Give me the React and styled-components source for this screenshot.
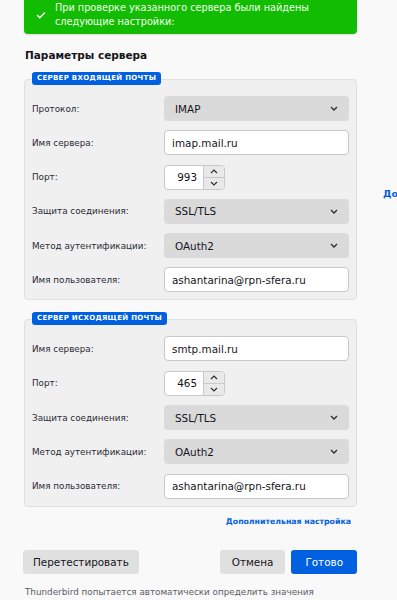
import React from "react";
import styled, { createGlobalStyle } from "styled-components";

const GlobalStyle = createGlobalStyle`
  html, body {
    margin: 0;
    padding: 0;
    background: #f9f9f9;
    font-family: "DejaVu Sans", "Liberation Sans", sans-serif;
    color: #15141a;
  }
`;

const Page = styled.div`
  display: flex;
  width: 397px;
  height: 600px;
  overflow: hidden;
  padding-left: 24px;
  box-sizing: border-box;
`;

const Main = styled.div`
  flex: 0 0 333px;
  min-width: 0;
  display: flex;
  flex-direction: column;
  margin-top: -3px;
`;

const Side = styled.div`
  flex: 0 0 auto;
  margin-left: 26px;
  padding-top: 182px;
  white-space: nowrap;
`;

const SideLink = styled.a`
  font-size: 9.5px;
  font-weight: bold;
  color: #0060df;
  text-decoration: none;
`;

const Banner = styled.div`
  display: flex;
  align-items: center;
  gap: 9px;
  background: #12bc00;
  color: #f3fff0;
  border-radius: 4px;
  padding: 4px 12px 5px 12px;
  font-size: 9.7px;
  line-height: 14px;
  box-shadow: 0 1px 2px rgba(0, 0, 0, 0.12);
`;

const Heading = styled.h2`
  margin: 13px 0 0 1px;
  font-size: 10.5px;
  font-weight: bold;
  line-height: 16px;
`;

const Group = styled.div`
  position: relative;
  background: #f0f0f0;
  border: 1px solid #e0e0e0;
  border-radius: 4px;
  padding: 16px 7px 7px 7px;
  margin-top: ${p => p.$top}px;
  display: grid;
  grid-template-columns: 132px 185px;
  row-gap: 9.3px;
  align-items: center;
`;

const Legend = styled.div`
  position: absolute;
  top: -8px;
  left: 7px;
  background: #0060df;
  color: #fff;
  border-radius: 3px;
  padding: 0 5px;
  height: 13px;
  line-height: 13px;
  font-size: 7px;
  font-weight: bold;
  letter-spacing: 0.3px;
  text-transform: uppercase;
  white-space: nowrap;
`;

const Label = styled.div`
  font-size: 8.8px;
  color: #2b2a33;
`;

const Select = styled.div`
  height: 25px;
  border-radius: 4px;
  background: #dadada;
  display: flex;
  align-items: center;
  justify-content: space-between;
  padding: 0 11px 0 11px;
  font-size: 10.4px;
`;

const Input = styled.div`
  height: 25px;
  box-sizing: border-box;
  border-radius: 4px;
  background: #fff;
  border: 1px solid #c8c8c8;
  display: flex;
  align-items: center;
  padding-left: 7px;
  font-size: 10.4px;
`;

const Spin = styled.div`
  width: 61px;
  height: 25px;
  box-sizing: border-box;
  display: flex;
  border: 1px solid #c8c8c8;
  border-radius: 4px;
  background: #fff;
  overflow: hidden;
`;

const SpinValue = styled.div`
  flex: 1;
  display: flex;
  align-items: center;
  justify-content: flex-end;
  padding-right: 6px;
  font-size: 10.4px;
`;

const SpinButtons = styled.div`
  width: 20px;
  display: flex;
  flex-direction: column;
  border-left: 1px solid #c8c8c8;
  background: #e9e9e9;
`;

const SpinBtn = styled.div`
  flex: 1;
  display: flex;
  align-items: center;
  justify-content: center;
  & + & {
    border-top: 1px solid #c8c8c8;
  }
`;

const LinkRow = styled.div`
  display: flex;
  justify-content: flex-end;
  padding-right: 6px;
  margin-top: 10px;
  line-height: 9px;
`;

const Link = styled.a`
  font-size: 7.8px;
  font-weight: bold;
  color: #0060df;
  text-decoration: none;
`;

const Buttons = styled.div`
  display: flex;
  align-items: center;
  margin-top: 24px;
  margin-left: -1px;
  gap: 6px;
`;

const Button = styled.button`
  height: 24px;
  border: none;
  border-radius: 3px;
  padding: 0 ${p => p.$pad}px;
  font-family: inherit;
  font-size: 10.4px;
  background: ${p => (p.$primary ? "#0060df" : "#e0e0e0")};
  color: ${p => (p.$primary ? "#fff" : "#15141a")};
  margin-left: ${p => (p.$push ? "auto" : "0")};
`;

const Footnote = styled.div`
  margin-top: 13px;
  margin-left: 1px;
  font-size: 8.8px;
  line-height: 11px;
  color: #5b5b66;
  white-space: nowrap;
`;

const Chevron = () => (
  <svg width="8" height="5" viewBox="0 0 8 5">
    <path d="M1 1l3 3 3-3" fill="none" stroke="#2b2a33" strokeWidth="1.3" />
  </svg>
);

const Check = () => (
  <svg width="10" height="8" viewBox="0 0 10 8">
    <path d="M1 4l2.8 2.8L9 1.5" fill="none" stroke="#fff" strokeWidth="1.5" />
  </svg>
);

const Arrow = ({ up }) => (
  <svg width="8" height="5" viewBox="0 0 8 5">
    <path
      d={up ? "M1 4l3-3 3 3" : "M1 1l3 3 3-3"}
      fill="none"
      stroke="#2b2a33"
      strokeWidth="1.1"
    />
  </svg>
);

const SelectField = ({ value }) => (
  <Select>
    <span>{value}</span>
    <Chevron />
  </Select>
);

const PortField = ({ value }) => (
  <Spin>
    <SpinValue>{value}</SpinValue>
    <SpinButtons>
      <SpinBtn>
        <Arrow up />
      </SpinBtn>
      <SpinBtn>
        <Arrow />
      </SpinBtn>
    </SpinButtons>
  </Spin>
);

export default function App() {
  return (
    <Page>
      <GlobalStyle />
      <Main>
        <Banner>
          <Check />
          <div>
            При проверке указанного сервера были найдены
            <br />
            следующие настройки:
          </div>
        </Banner>
        <Heading>Параметры сервера</Heading>

        <Group $top={16}>
          <Legend>Сервер входящей почты</Legend>
          <Label>Протокол:</Label>
          <SelectField value="IMAP" />
          <Label>Имя сервера:</Label>
          <Input>imap.mail.ru</Input>
          <Label>Порт:</Label>
          <PortField value="993" />
          <Label>Защита соединения:</Label>
          <SelectField value="SSL/TLS" />
          <Label>Метод аутентификации:</Label>
          <SelectField value="OAuth2" />
          <Label>Имя пользователя:</Label>
          <Input>ashantarina@rpn-sfera.ru</Input>
        </Group>

        <Group $top={19}>
          <Legend>Сервер исходящей почты</Legend>
          <Label>Имя сервера:</Label>
          <Input>smtp.mail.ru</Input>
          <Label>Порт:</Label>
          <PortField value="465" />
          <Label>Защита соединения:</Label>
          <SelectField value="SSL/TLS" />
          <Label>Метод аутентификации:</Label>
          <SelectField value="OAuth2" />
          <Label>Имя пользователя:</Label>
          <Input>ashantarina@rpn-sfera.ru</Input>
        </Group>

        <LinkRow>
          <Link href="#">Дополнительная настройка</Link>
        </LinkRow>

        <Buttons>
          <Button $pad={10}>Перетестировать</Button>
          <Button $pad={12} $push>Отмена</Button>
          <Button $pad={14} $primary>Готово</Button>
        </Buttons>

        <Footnote>Thunderbird попытается автоматически определить значения</Footnote>
      </Main>
      <Side>
        <SideLink href="#">Дополнительная настройка</SideLink>
      </Side>
    </Page>
  );
}
